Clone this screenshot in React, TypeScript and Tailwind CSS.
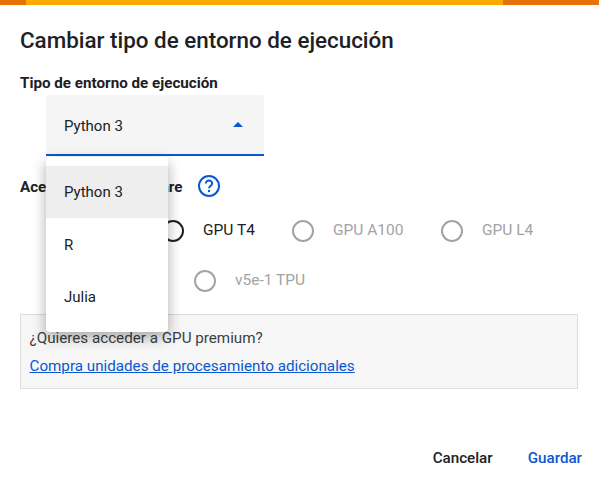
import React from 'react';

const Radio: React.FC<{ label: string; active?: boolean; className?: string }> = ({ label, active, className = '' }) => (
  <label className={`flex items-center ${className}`}>
    <span className={`block shrink-0 w-[22px] h-[22px] rounded-full border-2 ${active ? 'border-[#202124]' : 'border-[#a3a3a3]'}`} />
    <span className={`ml-[19px] text-[15.5px] whitespace-nowrap ${active ? 'text-[#202124]' : 'text-[#a3a3a3]'}`}>{label}</span>
  </label>
);

const Menu: React.FC = () => (
  <div className="absolute left-0 top-[62px] z-10 w-[122px] h-[175px] py-[9px] bg-white rounded-[4px] shadow-[0_5px_14px_rgba(0,0,0,0.32)] text-[15px] text-[#202124]">
    <div className="h-[52px] pl-[18px] pt-[1px] flex items-center bg-[#eeeeee]">Python 3</div>
    <div className="h-[53px] pl-[18px] pt-[2px] flex items-center">R</div>
    <div className="h-[52px] pl-[18px] pt-[1px] flex items-center">Julia</div>
  </div>
);

export default function App() {
  return (
    <div className="w-[599px] h-[484px] bg-white overflow-hidden font-['Roboto',sans-serif] text-[#202124]">
      {/* Top stripe */}
      <div className="flex h-[5px]">
        <div className="w-[26px] bg-[#e8710a]" />
        <div className="flex-1 bg-[#f9ab00]" />
        <div className="w-[96px] bg-[#e8710a]" />
      </div>

      <div className="px-[20px]">
        <h1 className="mt-[21px] h-[28px] text-[22.4px] leading-[28px] font-medium">Cambiar tipo de entorno de ejecución</h1>

        <div className="mt-[19px] text-[15.2px] leading-[20px] font-bold">Tipo de entorno de ejecución</div>

        {/* Select */}
        <div className="relative ml-[26px] mt-[2px] w-[218px]">
          <div className="h-[61px] pl-[18px] pr-[21px] flex items-center justify-between bg-[#f5f5f5] rounded-t-[4px] border-b-2 border-[#0b57d0] text-[15px]">
            <span className="pt-[3px]">Python 3</span>
            <svg width="10" height="5" viewBox="0 0 10 5" className="mb-px"><path d="M0 5 L5 0 L10 5 Z" fill="#0b57d0" /></svg>
          </div>
          <Menu />
        </div>

        {/* Accelerator */}
        <div className="mt-[19px] flex items-center h-[24px]">
          <span className="text-[15.2px] font-bold">Acelerador de hardware</span>
          <svg width="24" height="24" viewBox="0 0 24 24" className="ml-[15px] -mt-[2px]" fill="none">
            <circle cx="12" cy="12" r="10" stroke="#0b57d0" strokeWidth="2" />
            <path d="M8.8 9.6a3.2 3.2 0 0 1 6.4 0c0 2.2-3.2 2.5-3.2 4.6" stroke="#0b57d0" strokeWidth="2" />
            <circle cx="12" cy="17" r="1.2" fill="#0b57d0" />
          </svg>
        </div>

        <div className="mt-[21px] ml-[32px] flex items-center h-[22px]">
          <Radio label="Ninguna" className="w-[110px]" />
          <Radio label="GPU T4" active className="w-[130px]" />
          <Radio label="GPU A100" className="w-[149px]" />
          <Radio label="GPU L4" />
        </div>

        <div className="mt-[28px] ml-[32px] flex items-center h-[22px]">
          <Radio label="v2-8 TPU" className="w-[142px]" />
          <Radio label="v5e-1 TPU" />
        </div>

        {/* Premium box */}
        <div className="mt-[22px] w-[558px] h-[75px] pl-[8.5px] pt-[13px] bg-[#f6f6f6] border border-[#dddddd] text-[15.2px] leading-[20px]">
          <p className="text-[#3c4043]">¿Quieres acceder a GPU premium?</p>
          <a href="#" className="block mt-[8px] text-[#0b57d0] underline">Compra unidades de procesamiento adicionales</a>
        </div>

        {/* Actions */}
        <div className="mt-[59px] -mr-[3px] flex justify-end gap-[35px] text-[15.2px] leading-[20px] font-medium">
          <button className="text-[#202124]">Cancelar</button>
          <button className="text-[#0b57d0]">Guardar</button>
        </div>
      </div>
    </div>
  );
}
